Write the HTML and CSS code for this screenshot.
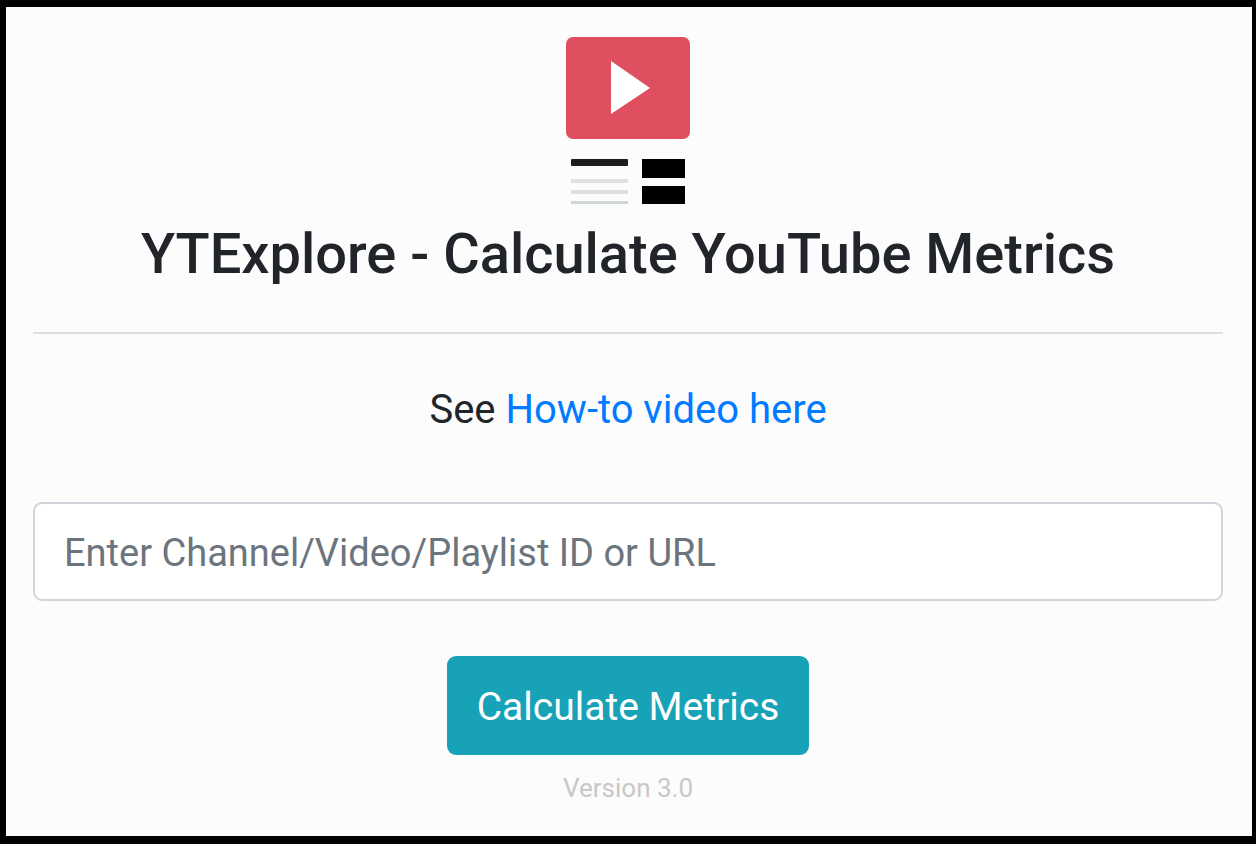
FILE: index.html
```
<!DOCTYPE html>
<html lang="en">
<head>
<meta charset="utf-8">
<title>YTExplore</title>
<link rel="stylesheet" href="styles.css">
</head>
<body>
<main class="popup">
  <svg class="logo" viewBox="0 0 124 168" role="img" aria-label="YTExplore logo">
    <rect width="124" height="102" rx="7" fill="#e04f5f"/>
    <path d="M45 24v53l39-26z" fill="#fff"/>
    <rect x="5" y="122" width="57" height="7" rx="1" fill="#1c1d1f"/>
    <rect x="5" y="142" width="57" height="4" fill="#e0e0e0"/>
    <rect x="5" y="153" width="57" height="4" fill="#dedede"/>
    <rect x="5" y="164" width="57" height="3" fill="#d0d5d8"/>
    <rect x="76" y="122" width="43" height="19"/>
    <rect x="76" y="149" width="43" height="18"/>
  </svg>
  <h1 class="title">YTExplore - Calculate YouTube Metrics</h1>
  <hr class="rule">
  <p class="help">See <a class="link" href="#">How-to video here</a></p>
  <form class="form">
    <input class="field" type="text" aria-label="Channel, video or playlist" placeholder="Enter Channel/Video/Playlist ID or URL">
    <button class="button" type="button">Calculate Metrics</button>
  </form>
  <footer class="version">Version 3.0</footer>
</main>
</body>
</html>
```
FILE: styles.css
```
* { box-sizing: border-box; }
body {
  margin: 0;
  background: #000;
  color: #212529;
  font-family: Roboto, "Liberation Sans", sans-serif;
}
.popup {
  display: flex;
  flex-direction: column;
  align-items: center;
  min-height: 100vh;
  padding: 30px 29px 24px 27px;
  border: solid #000;
  border-width: 7px 4px 8px 6px;
  background: #fcfcfc;
}
.logo { display: block; width: 124px; height: 168px; }
.title {
  margin: 13px 0 0;
  font-size: 56px;
  line-height: 72px;
  font-weight: 500;
  text-align: center;
}
.rule {
  width: 100%;
  margin: 42px 0 0;
  border: 0;
  border-top: 2px solid #dedede;
}
.help { margin: 46px 0 0; font-size: 40px; line-height: 60px; }
.link { color: #007bff; text-decoration: none; }
.form {
  display: flex;
  flex-direction: column;
  align-items: center;
  gap: 55px;
  width: 100%;
  margin-top: 62px;
}
.field {
  width: 100%;
  height: 99px;
  padding: 3px 29px 0;
  border: 2px solid #ced4da;
  border-radius: 9px;
  background: #fff;
  color: #495057;
  font: inherit;
  font-size: 38px;
}
.field::placeholder { color: #6c757d; opacity: 1; }
.button {
  height: 99px;
  padding: 3px 30px 0;
  border: 0;
  border-radius: 9px;
  background: #17a2b8;
  color: #fff;
  font: inherit;
  font-size: 39px;
}
.version { margin-top: 17px; font-size: 26px; line-height: 32px; color: #c8c8c8; }
```
